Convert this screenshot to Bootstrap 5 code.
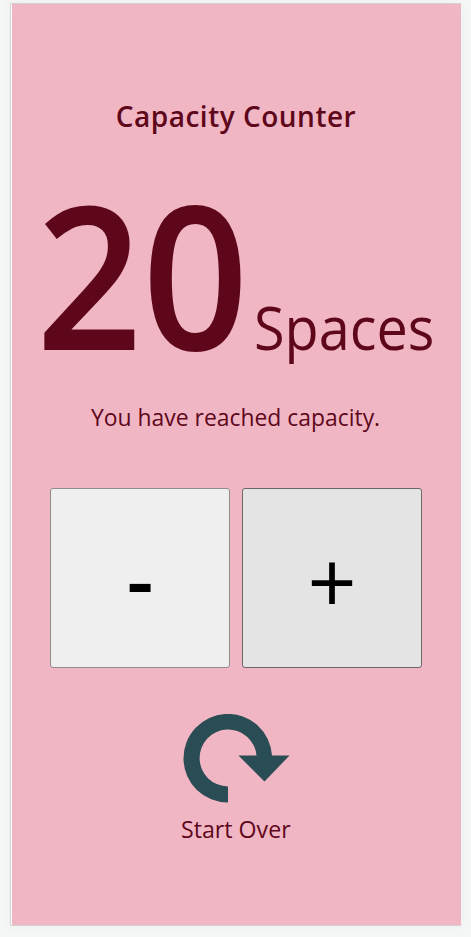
<!DOCTYPE html>
<html lang="en">
<head>
<meta charset="utf-8">
<meta name="viewport" content="width=device-width, initial-scale=1">
<title>Capacity Counter</title>
<link href="https://cdn.jsdelivr.net/npm/bootstrap@5.3.0/dist/css/bootstrap.min.css" rel="stylesheet">
<style>
body{background:#f5f6f6;font-family:"Trebuchet MS","Open Sans","Noto Sans",sans-serif;color:#5e071b;height:937px;overflow:hidden;padding:3px 10px 0}
.phone{width:451px;height:923px;background:#f1b6c4;border:1px solid #d5d3d4;border-right:0;box-shadow:inset 1px 0 #fff,0 0 12px rgba(0,0,0,.035);padding-top:92px}
.title{font-size:28px;line-height:40px;font-weight:600;letter-spacing:.5px;margin:0 0 37px}
.total{height:200px;width:388px;margin-left:25px}
.digits{font-size:200px;line-height:200px;width:218px;font-weight:550}
.unit{font-size:60px;line-height:80px}
.fit{display:inline-block;white-space:nowrap}
.fit-digits{transform:scaleX(.93);transform-origin:0 50%}
.fit-unit{transform:scaleX(.93);transform-origin:0 50%}
.fit-note{transform:scaleX(.954)}
.fit-reset{transform:scaleX(.965)}
.note{font-size:24px;line-height:36px;margin:26px 0 53px}
.pads{gap:12px}
.pad{width:180px;height:180px;border:1px solid #8f8b8c;border-radius:3px;background:#efefef;color:#000;padding:0;font-size:83px;font-weight:600;line-height:174px}
.pad-plus{background:#e4e4e4;border-color:#6b6769;font-size:86px;font-weight:500;line-height:170px;padding-top:6px}
.reset{margin-top:46px;border:0;background:none;color:inherit;padding:0;font-size:24px;line-height:36px}
.reset svg{display:block;margin:0 auto 8px}
</style>
</head>
<body>
<main class="phone d-flex flex-column align-items-center">
<h1 class="title"><span class="fit">Capacity Counter</span></h1>
<div class="total d-flex align-items-baseline align-self-start"><span class="digits flex-shrink-0"><span class="fit fit-digits">20</span></span><span class="unit"><span class="fit fit-unit">Spaces</span></span></div>
<p class="note"><span class="fit fit-note">You have reached capacity.</span></p>
<div class="pads d-flex">
<button type="button" class="pad" aria-label="Remove one"><span class="fit">-</span></button>
<button type="button" class="pad pad-plus" aria-label="Add one"><span class="fit">+</span></button>
</div>
<button type="button" class="reset"><svg width="107" height="89" viewBox="0 0 107 89" aria-hidden="true"><path fill="#2a4d55" d="M45 88.500A44.300 44.300 0 1 1 89 41.500H106.500L81.500 67.500L55.500 41.500H73.500A28.500 28.500 0 1 0 45 72.500Z"/></svg><span class="fit fit-reset">Start Over</span></button>
</main>
<script src="https://cdn.jsdelivr.net/npm/bootstrap@5.3.0/dist/js/bootstrap.bundle.min.js"></script>
</body>
</html>
